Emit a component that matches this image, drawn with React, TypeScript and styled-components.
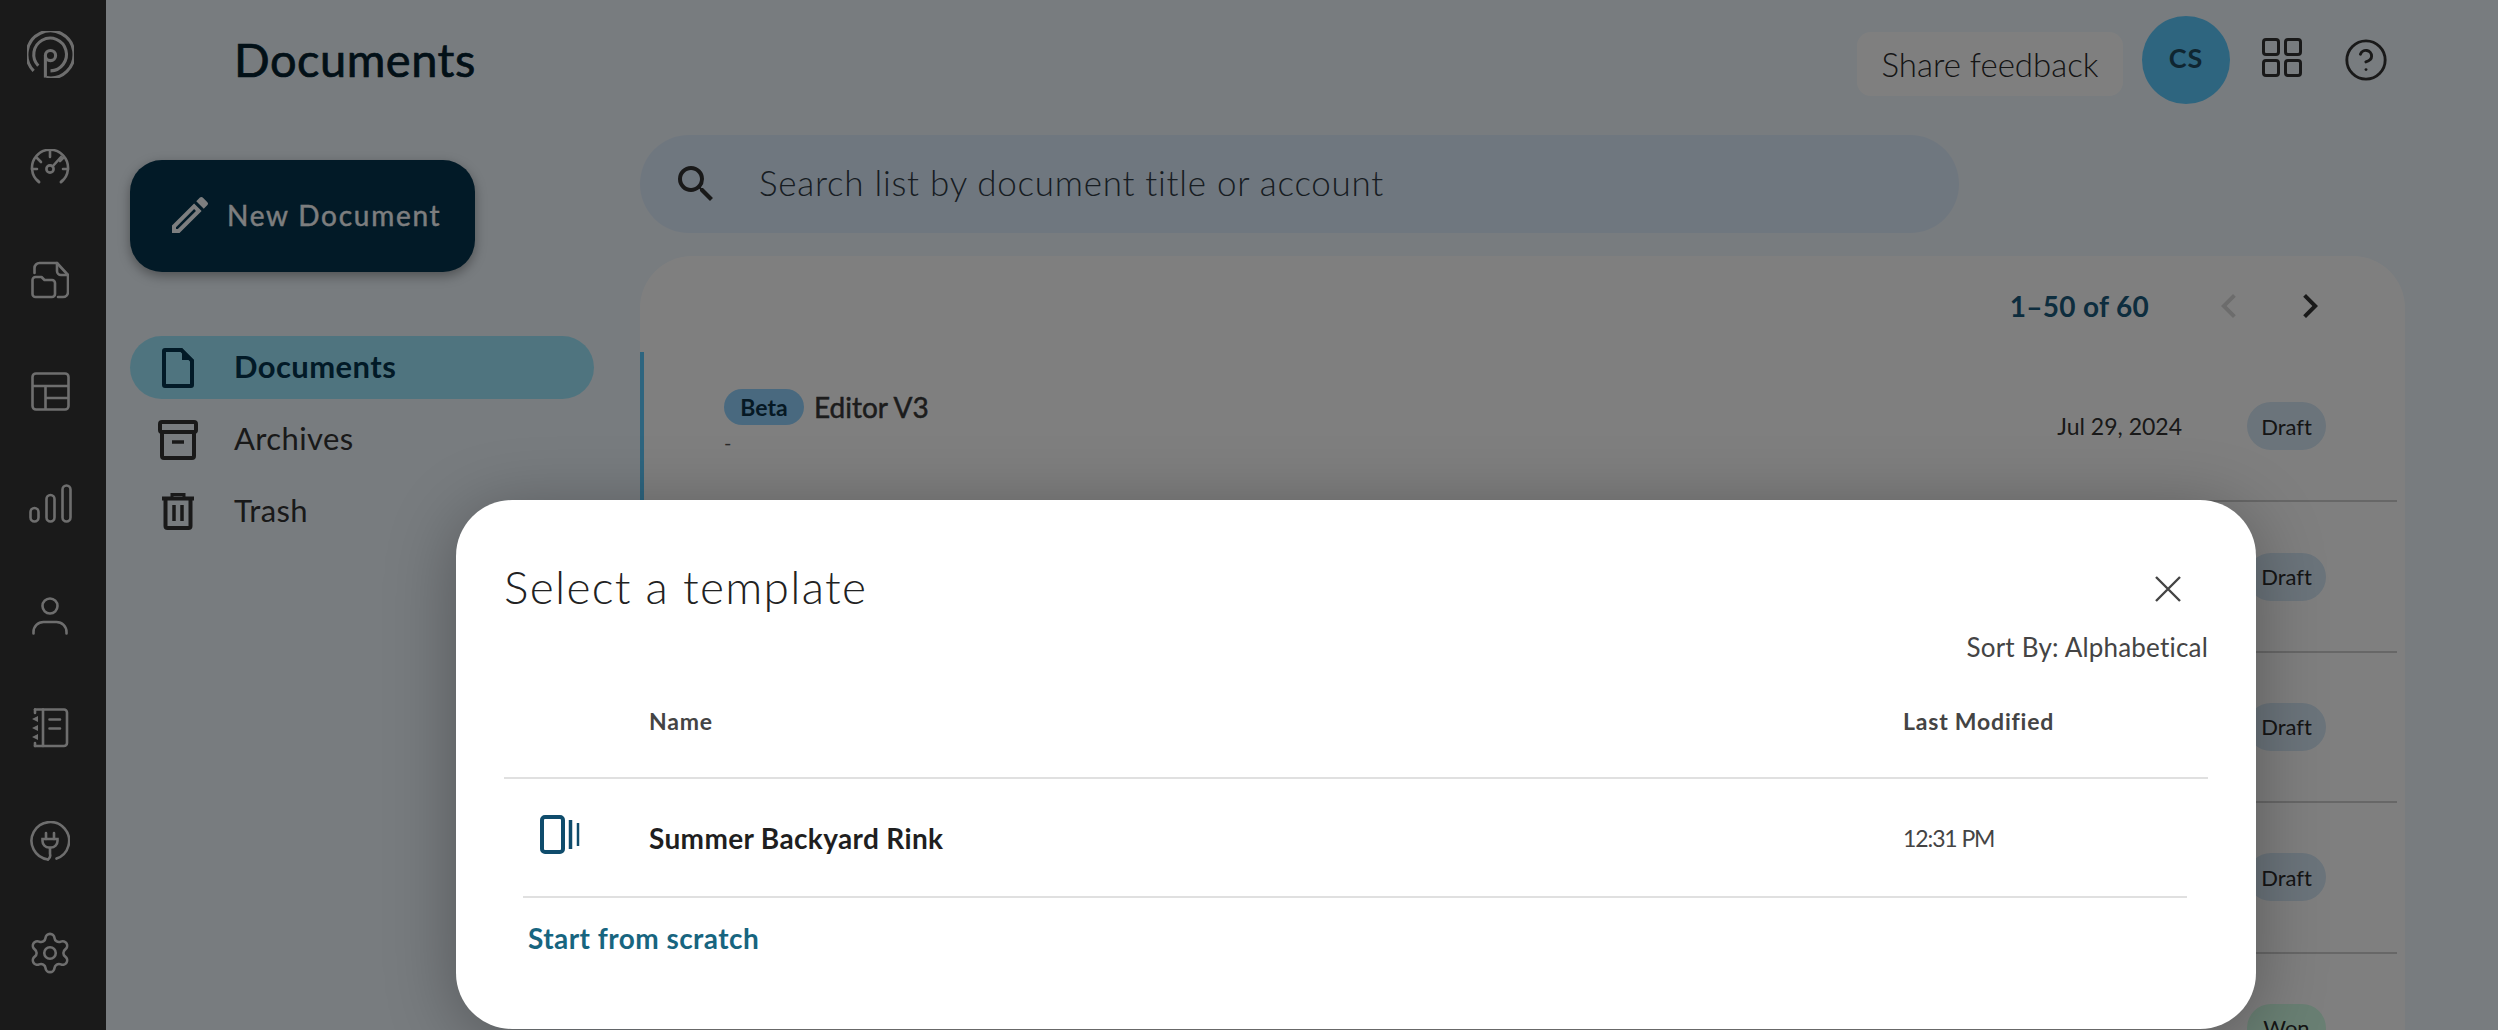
import styled, { createGlobalStyle } from "styled-components";
import { MdChevronLeft, MdChevronRight, MdOutlineEdit, MdSearch } from "react-icons/md";
import { CircleHelp, Settings } from "lucide-react";

const GlobalStyle = createGlobalStyle`
  html, body {
    margin: 0;
    padding: 0;
    background: #f0f8fe;
    font-family: "Lato", "Liberation Sans", sans-serif;
    font-variant-ligatures: none;
    color: #222;
  }
  * {
    box-sizing: border-box;
  }
`;

const Page = styled.div`
  position: relative;
  display: flex;
  width: 2498px;
  height: 1030px;
  overflow: hidden;
`;

const Rail = styled.nav`
  display: flex;
  flex-direction: column;
  align-items: center;
  flex: 0 0 106px;
  background: #343434;
  color: #dcdcdc;
`;

const RailItem = styled.div`
  display: flex;
  align-items: center;
  justify-content: center;
  flex: 0 0 112.3px;
  width: 100%;
  padding: 0 6px 3px 0;
`;

const Main = styled.div`
  display: flex;
  flex-direction: column;
  flex: 1;
  min-width: 0;
`;

const Header = styled.header`
  display: flex;
  align-items: center;
  flex: 0 0 135px;
  padding: 0 113px 15px 128px;
`;

const Title = styled.h1`
  flex: 1;
  margin: 0 0 2px;
  font-size: 47px;
  font-weight: 400;
  letter-spacing: 0.5px;
  -webkit-text-stroke: 0.7px #04212f;
  color: #04212f;
`;

const ShareButton = styled.button`
  width: 266px;
  height: 64px;
  margin: 8px 19px 0 0;
  border: 0;
  border-radius: 14px;
  background: #ffffff;
  font-family: inherit;
  font-size: 33px;
  font-weight: 300;
  color: #2a2a2a;
`;

const Avatar = styled.div`
  display: flex;
  align-items: center;
  justify-content: center;
  width: 88px;
  height: 88px;
  padding-bottom: 6px;
  border-radius: 50%;
  background: #5ccbff;
  font-size: 27px;
  font-weight: 700;
  letter-spacing: 1px;
  color: #1f4c63;
`;

const GridIcon = styled.svg`
  margin: 0 0 5px 32px;
  color: #333;
`;

const HelpIcon = styled(CircleHelp)`
  margin: 0 -4px 0 41px;
  color: #333;
`;

const Body = styled.div`
  display: flex;
  flex: 1;
  min-height: 0;
`;

const SidePanel = styled.aside`
  flex: 0 0 534px;
  padding: 25px 46px 0 24px;
`;

const NewButton = styled.button`
  display: flex;
  align-items: center;
  width: 345px;
  height: 112px;
  padding: 0 0 2px 36px;
  border: 0;
  border-radius: 32px;
  background: #04354e;
  box-shadow: 0 4px 12px rgba(0, 0, 0, 0.35);
  font-family: inherit;
  font-size: 28px;
  font-weight: 400;
  letter-spacing: 1.75px;
  -webkit-text-stroke: 0.4px #fbfdff;
  color: #fbfdff;
`;

const ButtonLabel = styled.span`
  margin-left: 13px;
`;

const NavList = styled.ul`
  display: flex;
  flex-direction: column;
  gap: 9px;
  margin: 64px 0 0;
  padding: 0;
  list-style: none;
`;

const NavItem = styled.li<{ $active?: boolean }>`
  display: flex;
  align-items: center;
  height: 63px;
  border-radius: 32px;
  background: ${(p) => (p.$active ? "#9fe9ff" : "transparent")};
  font-size: 31px;
  font-weight: ${(p) => (p.$active ? 700 : 400)};
  letter-spacing: 0.4px;
  color: ${(p) => (p.$active ? "#04354e" : "#333")};
`;

const NavIcon = styled.span`
  display: flex;
  align-items: center;
  justify-content: center;
  flex: 0 0 96px;
  margin-right: 8px;
`;

const NavLabel = styled.span`
  margin-bottom: 3px;
`;

const Content = styled.section`
  display: flex;
  flex-direction: column;
  gap: 23px;
  width: 1765px;
`;

const SearchBar = styled.div`
  display: flex;
  align-items: center;
  flex: 0 0 98px;
  width: 1319px;
  padding-left: 32px;
  border-radius: 49px;
  background: #dfeeff;
  color: #333;
`;

const SearchText = styled.span`
  margin: 0 0 4px 39px;
  font-size: 35px;
  font-weight: 300;
  letter-spacing: 0.73px;
  color: #2f3a44;
`;

const Card = styled.div`
  flex: 1;
  border-radius: 52px 52px 0 0;
  background: #ffffff;
`;

const Pager = styled.div`
  display: flex;
  align-items: center;
  justify-content: flex-end;
  height: 96px;
  padding: 4px 71px 0 0;
`;

const PagerText = styled.span`
  margin-right: 56px;
  font-size: 28px;
  font-weight: 700;
  letter-spacing: 0.3px;
  color: #1a5a7c;
`;

const PagerIcon = styled.span<{ $disabled?: boolean }>`
  display: flex;
  margin-left: ${(p) => (p.$disabled ? 0 : 33)}px;
  color: ${(p) => (p.$disabled ? "#d8d8d8" : "#333")};
`;

const ListRow = styled.div<{ $selected?: boolean }>`
  display: flex;
  align-items: center;
  height: 150.4px;
  margin-right: 8px;
  padding: 0 71px 0 84px;
  border-bottom: 2px solid #cfcfcf;
  border-left: ${(p) => (p.$selected ? "4px solid #5ccbff" : "0")};
  padding-left: ${(p) => (p.$selected ? 80 : 84)}px;
`;

const RowMain = styled.div`
  flex: 1;
  margin-bottom: 9px;
`;

const RowTitle = styled.div`
  display: flex;
  align-items: center;
  gap: 10px;
  font-size: 28px;
  font-weight: 400;
  -webkit-text-stroke: 0.5px #383838;
  color: #383838;
`;

const BetaPill = styled.span`
  display: flex;
  align-items: center;
  justify-content: center;
  width: 80px;
  height: 36px;
  border-radius: 18px;
  background: #93d3ff;
  font-size: 23px;
  font-weight: 700;
  -webkit-text-stroke: 0;
  color: #0c3349;
`;

const RowSub = styled.div`
  margin-top: 5px;
  font-size: 20px;
  color: #555;
`;

const RowDate = styled.span`
  margin-right: 65px;
  font-size: 23px;
  font-weight: 400;
  color: #333;
`;

const StatusPill = styled.span<{ $won?: boolean }>`
  display: flex;
  align-items: center;
  justify-content: center;
  width: 79px;
  height: 48px;
  border-radius: 24px;
  background: ${(p) => (p.$won ? "#d2ffe6" : "#d6e8f6")};
  font-size: 22px;
  color: #2a2a2a;
`;

const Overlay = styled.div`
  position: absolute;
  inset: 0;
  display: flex;
  align-items: flex-end;
  padding: 0 0 1px 456px;
  background: rgba(0, 0, 0, 0.5);
`;

const Modal = styled.div`
  width: 1800px;
  height: 529px;
  padding: 0 48px;
  border-radius: 56px;
  background: #ffffff;
  box-shadow: 0 10px 70px rgba(0, 0, 0, 0.3);
`;

const ModalTop = styled.div`
  display: flex;
  align-items: center;
  justify-content: space-between;
  height: 120px;
  padding: 58px 27px 0 0;
`;

const ModalTitle = styled.h2`
  margin: 0 0 5px;
  font-size: 46px;
  font-weight: 300;
  letter-spacing: 1.3px;
  color: #222;
`;

const SortRow = styled.div`
  display: flex;
  align-items: center;
  justify-content: flex-end;
  height: 56px;
  padding-bottom: 3px;
  font-size: 26px;
  font-weight: 400;
  letter-spacing: 0.2px;
  color: #444;
`;

const TableHead = styled.div`
  display: grid;
  grid-template-columns: 145px 1254px 1fr;
  align-items: center;
  height: 103px;
  padding-bottom: 11px;
  border-bottom: 2px solid #e0e0e0;
  font-size: 23px;
  font-weight: 700;
  letter-spacing: 0.8px;
  color: #444;
`;

const TemplateRow = styled.div`
  display: grid;
  grid-template-columns: 126px 1254px 1fr;
  align-items: center;
  height: 119px;
  margin: 0 21px 0 19px;
  border-bottom: 2px solid #e0e0e0;
`;

const TemplateIcon = styled.svg`
  margin: 0 0 6px 17px;
  color: #0f4c6c;
`;

const TemplateName = styled.span`
  font-size: 28px;
  font-weight: 700;
  letter-spacing: 0.35px;
  color: #1f1f1f;
`;

const TemplateDate = styled.span`
  font-size: 23px;
  font-weight: 400;
  letter-spacing: -1.1px;
  color: #444;
`;

const ScratchLink = styled.a`
  display: block;
  margin: 23px 0 0 24px;
  font-size: 28px;
  font-weight: 700;
  letter-spacing: 0.45px;
  color: #17657f;
`;

const LogoMark = () => (
  <svg width="47" height="47" viewBox="7 12 46 46" fill="none" stroke="currentColor" strokeWidth="3">
    <path d="M13.5 51A23 23 0 1 1 26 57.6" />
    <path d="M18 46A16 16 0 1 1 30 51" />
    <path d="M25 57.6V36" />
    <circle cx="30" cy="36" r="5" />
  </svg>
);

const GaugeIcon = () => (
  <svg width="40" height="36" viewBox="0 0 40 36" fill="none" stroke="currentColor" strokeWidth="2.6" strokeLinecap="round">
    <path d="M9 33 A18 18 0 1 1 31 33" />
    <path d="M9 33l-2-2M31 33l2-2" />
    <path d="M20 2v6M7 9l4 4M2 20h5M33 20h5M33 9l-3 3" />
    <circle cx="20" cy="20" r="3.6" />
    <path d="M22.5 17.5 L31 8" />
  </svg>
);

const FileFolderIcon = () => (
  <svg width="38" height="40" viewBox="0 0 38 40" fill="none" stroke="currentColor" strokeWidth="2.6" strokeLinecap="round" strokeLinejoin="round">
    <path d="M3.5 14V9a5 5 0 0 1 5-5H26L37 16V33a5 5 0 0 1-5 5H27" />
    <path d="M26 4V12a4 4 0 0 0 4 4H37" />
    <path d="M1.5 21a3 3 0 0 1 3-3h6l3 3h7.500a3 3 0 0 1 3 3V35a3 3 0 0 1-3 3H4.500a3 3 0 0 1-3-3Z" />
  </svg>
);

const TableIcon = () => (
  <svg width="39" height="39" viewBox="0 0 39 39" fill="none" stroke="currentColor" strokeWidth="2.6" strokeLinejoin="round">
    <rect x="1.500" y="1.500" width="36" height="36" rx="3.500" />
    <path d="M1.500 14H37.500M14.500 14V37.500M14.500 26H37.500" />
  </svg>
);

const BarsIcon = () => (
  <svg width="43" height="39" viewBox="0 0 43 39" fill="none" stroke="currentColor" strokeWidth="2.6">
    <rect x="1.500" y="24" width="8" height="13.500" rx="4" />
    <rect x="17.500" y="11" width="8" height="26.500" rx="4" />
    <rect x="33.500" y="1.500" width="8" height="36" rx="4" />
  </svg>
);

const PersonIcon = () => (
  <svg width="36" height="38" viewBox="0 0 36 38" fill="none" stroke="currentColor" strokeWidth="2.600" strokeLinecap="round">
    <circle cx="18" cy="9" r="7.500" />
    <path d="M1.500 36.500V35a10 10 0 0 1 10-10h13a10 10 0 0 1 10 10v1.500" />
  </svg>
);

const NotebookIcon = () => (
  <svg width="38" height="40" viewBox="0 0 38 40" fill="none" stroke="currentColor" strokeWidth="2.600" strokeLinecap="round">
    <path d="M4 1.500H33a3 3 0 0 1 3 3V35a3 3 0 0 1-3 3H4" />
    <path d="M4 1.500V5M4 35v3M12 1.500V38M18.500 11.500H29M18.500 20.500H29" />
    <path d="M1 11l6-3v6ZM1 20l6-3v6ZM1 29l6-3v6Z" fill="currentColor" stroke="none" />
  </svg>
);

const PlugIcon = () => (
  <svg width="40" height="40" viewBox="0 0 40 40" fill="none" stroke="currentColor" strokeWidth="2.600" strokeLinecap="round">
    <path d="M18 38.500A18.800 18.800 0 1 1 26.500 37.600" />
    <path d="M20 27V33a5 5 0 0 1-2 5.500" />
    <path d="M12.500 18H27.500V20a6.500 6.500 0 0 1-6.500 6.500H19A6.500 6.500 0 0 1 12.500 20Z" />
    <path d="M16 12V18M24 12V18" />
  </svg>
);

const DocumentIcon = () => (
  <svg width="32" height="40" viewBox="0 0 32 40" fill="#04354e">
    <path fillRule="evenodd" d="M3 0H20L32 12V37a3 3 0 0 1-3 3H3a3 3 0 0 1-3-3V3a3 3 0 0 1 3-3ZM4 4V36H28V13.500L18.500 4Z" />
    <path d="M20 0L32 12H20Z" />
  </svg>
);

const ArchiveIcon = () => (
  <svg width="40" height="40" viewBox="0 0 40 40" fill="none" stroke="currentColor" strokeWidth="4">
    <rect x="2" y="2" width="36" height="10" rx="2" />
    <path d="M4 12V36a2 2 0 0 0 2 2H34a2 2 0 0 0 2-2V12" />
    <path d="M14 22H26" strokeWidth="3.500" />
  </svg>
);

const TrashIcon = () => (
  <svg width="32" height="37" viewBox="0 0 32 37" fill="none" stroke="currentColor" strokeWidth="4">
    <path d="M0 5.500H32" />
    <path d="M10 5V1.500H22V5" strokeWidth="3" />
    <path d="M3.500 6V33a2 2 0 0 0 2 2H26.500a2 2 0 0 0 2-2V6" />
    <path d="M12 12V28M20 12V28" strokeWidth="3.500" />
  </svg>
);

const Draft = () => <StatusPill>Draft</StatusPill>;

export default function App() {
  return (
    <Page>
      <GlobalStyle />
      <Rail>
        <RailItem><LogoMark /></RailItem>
        <RailItem><GaugeIcon /></RailItem>
        <RailItem><FileFolderIcon /></RailItem>
        <RailItem><TableIcon /></RailItem>
        <RailItem><BarsIcon /></RailItem>
        <RailItem><PersonIcon /></RailItem>
        <RailItem><NotebookIcon /></RailItem>
        <RailItem><PlugIcon /></RailItem>
        <RailItem><Settings size={46} strokeWidth={1.35} /></RailItem>
      </Rail>
      <Main>
        <Header>
          <Title>Documents</Title>
          <ShareButton>Share feedback</ShareButton>
          <Avatar>CS</Avatar>
          <GridIcon width="40" height="39" viewBox="0 0 40 39" fill="none" stroke="currentColor" strokeWidth="3">
            <rect x="1.500" y="1.500" width="15" height="15" rx="2.500" />
            <rect x="23.500" y="1.500" width="15" height="15" rx="2.500" />
            <rect x="1.500" y="22.500" width="15" height="15" rx="2.500" />
            <rect x="23.500" y="22.500" width="15" height="15" rx="2.500" />
          </GridIcon>
          <HelpIcon size={46} strokeWidth={1.5} />
        </Header>
        <Body>
          <SidePanel>
            <NewButton>
              <MdOutlineEdit size={48} />
              <ButtonLabel>New Document</ButtonLabel>
            </NewButton>
            <NavList>
              <NavItem $active>
                <NavIcon><DocumentIcon /></NavIcon>
                <NavLabel>Documents</NavLabel>
              </NavItem>
              <NavItem>
                <NavIcon><ArchiveIcon /></NavIcon>
                <NavLabel>Archives</NavLabel>
              </NavItem>
              <NavItem>
                <NavIcon><TrashIcon /></NavIcon>
                <NavLabel>Trash</NavLabel>
              </NavItem>
            </NavList>
          </SidePanel>
          <Content>
            <SearchBar>
              <MdSearch size={48} />
              <SearchText>Search list by document title or account</SearchText>
            </SearchBar>
            <Card>
              <Pager>
                <PagerText>1–50 of 60</PagerText>
                <PagerIcon $disabled><MdChevronLeft size={48} /></PagerIcon>
                <PagerIcon><MdChevronRight size={48} /></PagerIcon>
              </Pager>
              <ListRow $selected>
                <RowMain>
                  <RowTitle>
                    <BetaPill>Beta</BetaPill>
                    Editor V3
                  </RowTitle>
                  <RowSub>-</RowSub>
                </RowMain>
                <RowDate>Jul 29, 2024</RowDate>
                <Draft />
              </ListRow>
              <ListRow><RowMain /><Draft /></ListRow>
              <ListRow><RowMain /><Draft /></ListRow>
              <ListRow><RowMain /><Draft /></ListRow>
              <ListRow><RowMain /><StatusPill $won>Won</StatusPill></ListRow>
            </Card>
          </Content>
        </Body>
      </Main>
      <Overlay>
        <Modal>
          <ModalTop>
            <ModalTitle>Select a template</ModalTitle>
            <svg width="26" height="26" viewBox="0 0 26 26" stroke="#444" strokeWidth="2.400">
              <path d="M1 1L25 25M25 1L1 25" />
            </svg>
          </ModalTop>
          <SortRow>Sort By: Alphabetical</SortRow>
          <TableHead>
            <span />
            <span>Name</span>
            <span>Last Modified</span>
          </TableHead>
          <TemplateRow>
            <TemplateIcon width="41" height="39" viewBox="0 0 41 39" fill="none" stroke="currentColor">
              <rect x="2" y="2" width="21" height="35" rx="3" strokeWidth="4" />
              <path d="M30.500 5V34" strokeWidth="3.500" />
              <path d="M38 8V31" strokeWidth="2.500" />
            </TemplateIcon>
            <TemplateName>Summer Backyard Rink</TemplateName>
            <TemplateDate>12:31 PM</TemplateDate>
          </TemplateRow>
          <ScratchLink>Start from scratch</ScratchLink>
        </Modal>
      </Overlay>
    </Page>
  );
}
